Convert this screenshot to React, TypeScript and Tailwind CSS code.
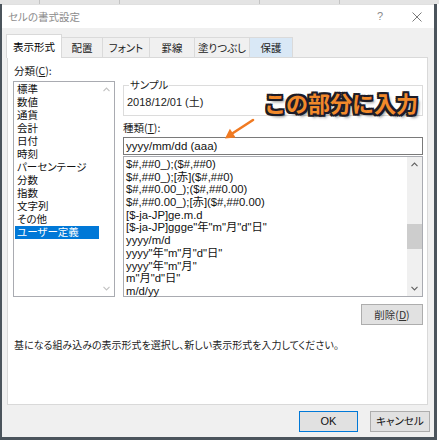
const Chevron = ({ dir, color }: { dir: "up" | "down"; color: string }) => (
  <svg width="7" height="5" viewBox="0 0 7 5">
    <polyline
      points={dir === "up" ? "0.5,4.2 3.5,1 6.5,4.2" : "0.5,0.8 3.5,4 6.5,0.8"}
      fill="none"
      stroke={color}
      strokeWidth="1.1"
    />
  </svg>
);

export default function App() {
  const cats = [
    "標準",
    "数値",
    "通貨",
    "会計",
    "日付",
    "時刻",
    "パーセンテージ",
    "分数",
    "指数",
    "文字列",
    "その他",
    "ユーザー定義",
  ];
  const fmts = [
    "$#,##0_);($#,##0)",
    "$#,##0_);[赤]($#,##0)",
    "$#,##0.00_);($#,##0.00)",
    "$#,##0.00_);[赤]($#,##0.00)",
    "[$-ja-JP]ge.m.d",
    '[$-ja-JP]ggge"年"m"月"d"日"',
    "yyyy/m/d",
    'yyyy"年"m"月"d"日"',
    'yyyy"年"m"月"',
    'm"月"d"日"',
    "m/d/yy",
  ];
  const tabs = [
    { t: "配置", w: "w-[41px]", bg: "bg-[#f0f0f0]" },
    { t: "フォント", w: "w-[47px]", bg: "bg-[#f0f0f0]" },
    { t: "罫線", w: "w-[45px]", bg: "bg-[#f0f0f0]" },
    { t: "塗りつぶし", w: "w-[55px]", bg: "bg-[#f0f0f0]" },
    { t: "保護", w: "w-[43px]", bg: "bg-[#d9e8f6]" },
  ];
  return (
    <div className="relative w-[439px] h-[446px] bg-white overflow-hidden font-['Liberation_Sans','Noto_Sans_CJK_JP',sans-serif] text-[#1a1a1a]">
      {/* excel grid strip behind */}
      <div className="flex h-[4px] bg-[#e4e4e4]">
        <div className="w-[40px] border-r border-[#c4c4c4]" />
        <div className="w-[80px] border-r border-[#c4c4c4]" />
        <div className="w-[140px] border-r border-[#c4c4c4]" />
        <div className="w-[80px] border-r border-[#c4c4c4]" />
      </div>

      <div className="w-[437px] h-[436px] border-l-2 border-r-[3px] border-b-[3px] border-[#4b545c] bg-[#f0f0f0] flex flex-col">
        {/* title bar */}
        <div className="h-[24px] bg-white flex items-center pl-[6px] pr-[12px] border-t border-[#e0e0e0]">
          <span className="text-[10.5px] text-[#8c8c8c] font-['Noto_Sans_CJK_JP',sans-serif] [font-feature-settings:'palt']">
            セルの書式設定
          </span>
          <div className="flex-1" />
          <span className="text-[11px] text-[#8a8a8a] mr-[29px]">?</span>
          <svg width="10" height="10" viewBox="0 0 10 10">
            <path d="M0.5 0.5 L9.5 9.5 M9.5 0.5 L0.5 9.5" stroke="#7a7a7a" strokeWidth="1" />
          </svg>
        </div>

        {/* tabs */}
        <div className="h-[29px] flex items-end pl-[4px] font-['Noto_Sans_CJK_JP',sans-serif] [font-feature-settings:'palt'] text-[10.5px]">
          <div className="relative z-10 -mb-px h-[24px] w-[56px] bg-white border border-b-0 border-[#d9d9d9] flex items-center justify-center text-black">
            表示形式
          </div>
          {tabs.map((tab) => (
            <div
              key={tab.t}
              className={`h-[20px] ${tab.w} ${tab.bg} border-t border-r border-[#dadada] flex items-center justify-center text-[#222]`}
            >
              {tab.t}
            </div>
          ))}
        </div>

        {/* panel */}
        <div className="relative z-0 ml-[5px] w-[421px] h-[348px] bg-white border border-[#d9d9d9] pl-[5px] pt-[5px] flex flex-col">
          <div className="flex gap-[8px]">
            {/* category column */}
            <div className="flex flex-col w-[102px]">
              <div className="h-[16px] leading-[16px] ml-[1px] text-[10.5px] font-['Noto_Sans_CJK_JP',sans-serif] [font-feature-settings:'palt']">
                分類(<span className="underline">C</span>):
              </div>
              <div className="mt-[2px] h-[216px] border border-[#a9abb1] flex">
                <div className="flex-1 pt-[1px] pl-[1px] font-['Liberation_Sans','Noto_Sans_CJK_JP',sans-serif] [font-feature-settings:'palt'] text-[10.5px]">
                  {cats.map((c) => (
                    <div
                      key={c}
                      className={`h-[13px] leading-[13px] pl-[2px] overflow-hidden ${
                        c === "ユーザー定義" ? "bg-[#0078d7] text-white" : "text-[#111]"
                      }`}
                    >
                      {c}
                    </div>
                  ))}
                </div>
                <div className="w-[15px] flex flex-col items-center justify-between py-[5px]">
                  <Chevron dir="up" color="#c2c2c2" />
                  <Chevron dir="down" color="#c2c2c2" />
                </div>
              </div>
            </div>

            {/* right column */}
            <div className="flex flex-col w-[300px]">
              <fieldset className="mt-[15px] h-[38px] border border-[#dcdcdc] pl-[2px]">
                <legend className="ml-[3px] px-[1px] text-[10.5px] leading-[14px] text-[#222] font-['Noto_Sans_CJK_JP',sans-serif] [font-feature-settings:'palt']">
                  サンプル
                </legend>
                <div className="text-[11px] leading-[14px] mt-[3px] pl-[1px] text-[#222]">
                  2018/12/01 (土)
                </div>
              </fieldset>
              <div className="mt-[5px] h-[14px] leading-[14px] text-[10.5px] font-['Noto_Sans_CJK_JP',sans-serif] [font-feature-settings:'palt']">
                種類(<span className="underline">T</span>):
              </div>
              <div className="mt-[2px] h-[18px] border border-[#7a7a7a] text-[11.5px] leading-[16px] pl-[2px] text-[#111]">
                yyyy/mm/dd (aaa)
              </div>
              <div className="mt-[1px] h-[141px] border border-[#a9abb1] flex">
                <div className="flex-1 pt-[1px] pl-[2px] text-[11.3px] text-[#111]">
                  {fmts.map((f) => (
                    <div key={f} className="h-[12.7px] leading-[12.7px] whitespace-nowrap">
                      {f}
                    </div>
                  ))}
                </div>
                <div className="w-[15px] bg-[#f0f0f0] flex flex-col items-center">
                  <div className="h-[15px] flex items-center justify-center">
                    <Chevron dir="up" color="#606060" />
                  </div>
                  <div className="flex-1 w-full flex flex-col">
                    <div className="h-[52px]" />
                    <div className="h-[25px] w-full bg-[#cdcdcd]" />
                  </div>
                  <div className="h-[15px] flex items-center justify-center">
                    <Chevron dir="down" color="#606060" />
                  </div>
                </div>
              </div>
              <div className="mt-[7px] self-end h-[21px] w-[62px] bg-[#e1e1e1] border border-[#adadad] flex items-center justify-center text-[10.5px] text-[#333] font-['Noto_Sans_CJK_JP',sans-serif] [font-feature-settings:'palt']">
                削除(<span className="underline">D</span>)
              </div>
            </div>
          </div>
          <div className="mt-[13px] ml-[1px] h-[14px] leading-[14px] text-[10px] text-[#222] font-['Noto_Sans_CJK_JP',sans-serif] [font-feature-settings:'palt']">
            基になる組み込みの表示形式を選択し、新しい表示形式を入力してください。
          </div>
        </div>

        {/* footer */}
        <div className="flex-1 flex items-center justify-end gap-[12px] pr-[4px]">
          <div className="h-[21px] w-[59px] bg-[#e1e1e1] border border-[#0078d7] flex items-center justify-center text-[11px] text-[#111]">
            OK
          </div>
          <div className="h-[21px] w-[60px] bg-[#e1e1e1] border border-[#adadad] flex items-center justify-center text-[10.5px] text-[#111] font-['Noto_Sans_CJK_JP',sans-serif] [font-feature-settings:'palt']">
            キャンセル
          </div>
        </div>
      </div>

      {/* annotation overlay */}
      <div className="absolute left-[264px] top-[91px] text-[22px] leading-[22px] font-bold text-[#f2892a] font-['Noto_Sans_CJK_JP',sans-serif] whitespace-nowrap [text-shadow:-2px_-2px_0_#1c1c28,2px_-2px_0_#1c1c28,-2px_2px_0_#1c1c28,2px_2px_0_#1c1c28,0_-2px_0_#1c1c28,0_2px_0_#1c1c28,-2px_0_0_#1c1c28,2px_0_0_#1c1c28,3px_3px_3px_rgba(0,0,0,0.45)]">
        この部分に入力
      </div>
      <svg className="absolute left-0 top-0" width="439" height="446" viewBox="0 0 439 446">
        <line x1="253" y1="120" x2="233" y2="133" stroke="#f07a22" strokeWidth="2.6" strokeLinecap="round" />
        <polygon points="225,138.5 235.6,137.6 229.9,128.7" fill="#f07a22" />
      </svg>
    </div>
  );
}
